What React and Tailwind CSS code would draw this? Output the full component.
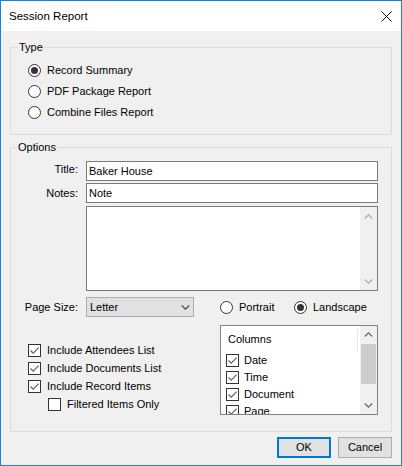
import React from "react";

function Radio({ checked }) {
  return (
    <span className="w-[13px] h-[13px] rounded-full border border-[#333333] bg-white flex items-center justify-center shrink-0">
      {checked && <span className="w-[7px] h-[7px] rounded-full bg-[#333333]" />}
    </span>
  );
}

function Check({ checked }) {
  return (
    <span className="w-[13px] h-[13px] border border-[#333333] bg-white flex items-center justify-center shrink-0">
      {checked && (
        <svg width="11" height="11" viewBox="0 0 11 11">
          <path d="M1.5 5.5 L4.2 8.2 L9.6 2.6" fill="none" stroke="#5f5f5f" strokeWidth="1.1" />
        </svg>
      )}
    </span>
  );
}

function Chevron({ up, color }) {
  return (
    <svg width="9" height="5" viewBox="0 0 9 5">
      <path
        d={up ? "M0.8 4.5 L4.5 0.8 L8.2 4.5" : "M0.8 0.5 L4.5 4.2 L8.2 0.5"}
        fill="none"
        stroke={color}
        strokeWidth="1.1"
      />
    </svg>
  );
}

export default function App() {
  return (
    <div className="w-[402px] h-[466px] border border-[#1883d7] bg-[#f0f0f0] flex flex-col text-[11px] leading-[13px] text-black font-['Liberation_Sans',Arial,sans-serif]">
      <div className="h-[30px] bg-white flex items-center justify-between pl-[8px] pr-[9px] shrink-0">
        <span className="text-[11.5px]">Session Report</span>
        <svg width="11" height="11" viewBox="0 0 11 11">
          <path d="M0.5 0.5 L10.5 10.5 M10.5 0.5 L0.5 10.5" stroke="#111" strokeWidth="1" />
        </svg>
      </div>

      <div className="flex-1 flex flex-col px-[9px]">
        <fieldset className="mt-[10px] border border-[#dcdcdc]">
          <legend className="ml-[7px] px-[1px] leading-[13px]">Type</legend>
          <div className="flex flex-col mt-[6px] pb-[11px] pl-[17px]">
            <div className="h-[21px] flex items-center gap-[6px]">
              <Radio checked />
              <span>Record Summary</span>
            </div>
            <div className="h-[21px] flex items-center gap-[6px]">
              <Radio />
              <span>PDF Package Report</span>
            </div>
            <div className="h-[21px] flex items-center gap-[6px]">
              <Radio />
              <span>Combine Files Report</span>
            </div>
          </div>
        </fieldset>

        <fieldset className="mt-[6px] border border-[#dcdcdc]">
          <legend className="ml-[6px] px-[1px] leading-[13px]">Options</legend>
          <div className="flex flex-col mt-[7px] pb-[16px]">
            <div className="h-[20px] flex items-center">
              <span className="w-[67px] text-right -mt-[4px]">Title:</span>
              <div className="ml-[8px] w-[292px] h-[20px] border border-[#7a7a7a] bg-white pl-[2px] flex items-center">
                Baker House
              </div>
            </div>
            <div className="h-[20px] flex items-center mt-[2px]">
              <span className="w-[67px] text-right">Notes:</span>
              <div className="ml-[8px] w-[292px] h-[20px] border border-[#7a7a7a] bg-white pl-[2px] flex items-center">
                Note
              </div>
            </div>
            <div className="mt-[3px] ml-[75px] w-[292px] h-[85px] border border-[#7a7a7a] bg-white flex justify-end">
              <div className="w-[17px] h-full bg-[#f0f0f0] flex flex-col justify-between">
                <div className="h-[19px] flex items-center justify-center">
                  <Chevron up color="#a8a8a8" />
                </div>
                <div className="h-[17px] flex items-center justify-center">
                  <Chevron color="#a8a8a8" />
                </div>
              </div>
            </div>

            <div className="h-[20px] flex items-center mt-[6px]">
              <span className="w-[67px] text-right">Page Size:</span>
              <div className="ml-[8px] w-[108px] h-[20px] border border-[#adadad] bg-[#e1e1e1] pl-[3px] pr-[3px] flex items-center justify-between">
                <span>Letter</span>
                <Chevron color="#444" />
              </div>
              <div className="ml-[26px] w-[74px] flex items-center gap-[6px]">
                <Radio />
                <span>Portrait</span>
              </div>
              <div className="flex items-center gap-[6px]">
                <Radio checked />
                <span>Landscape</span>
              </div>
            </div>

            <div className="flex mt-[8px]">
              <div className="w-[209px] flex flex-col pt-[16px]">
                <div className="h-[18px] flex items-center gap-[6px] pl-[17px]">
                  <Check checked />
                  <span>Include Attendees List</span>
                </div>
                <div className="h-[18px] flex items-center gap-[6px] pl-[17px]">
                  <Check checked />
                  <span>Include Documents List</span>
                </div>
                <div className="h-[18px] flex items-center gap-[6px] pl-[17px]">
                  <Check checked />
                  <span>Include Record Items</span>
                </div>
                <div className="h-[18px] flex items-center gap-[6px] pl-[37px]">
                  <Check />
                  <span>Filtered Items Only</span>
                </div>
              </div>
              <div className="w-[158px] h-[90px] border border-[#828282] bg-white flex">
                <div className="flex-1 flex flex-col overflow-hidden">
                  <div className="h-[26px] shrink-0 flex items-center">
                    <span className="flex-1 pl-[7px]">Columns</span>
                    <div className="w-[1px] h-[23px] bg-[#e5e5e5] mr-[2px] self-end" />
                  </div>
                  {["Date", "Time", "Document", "Page"].map((c) => (
                    <div key={c} className="h-[17px] shrink-0 flex items-center gap-[5px] pl-[5px]">
                      <Check checked />
                      <span>{c}</span>
                    </div>
                  ))}
                </div>
                <div className="w-[17px] h-full bg-[#f0f0f0] flex flex-col">
                  <div className="h-[17px] flex items-center justify-center">
                    <Chevron up color="#606060" />
                  </div>
                  <div className="mt-[1px] mx-[1px] h-[40px] bg-[#cdcdcd]" />
                  <div className="flex-1" />
                  <div className="h-[17px] flex items-center justify-center">
                    <Chevron color="#606060" />
                  </div>
                </div>
              </div>
            </div>
          </div>
        </fieldset>

        <div className="flex justify-end gap-[7px] mt-[5px]">
          <button className="w-[54px] h-[21px] border-2 border-[#0078d7] bg-[#e1e1e1] flex items-center justify-center">
            OK
          </button>
          <button className="w-[54px] h-[21px] border border-[#adadad] bg-[#e1e1e1] flex items-center justify-center">
            Cancel
          </button>
        </div>
      </div>
    </div>
  );
}
